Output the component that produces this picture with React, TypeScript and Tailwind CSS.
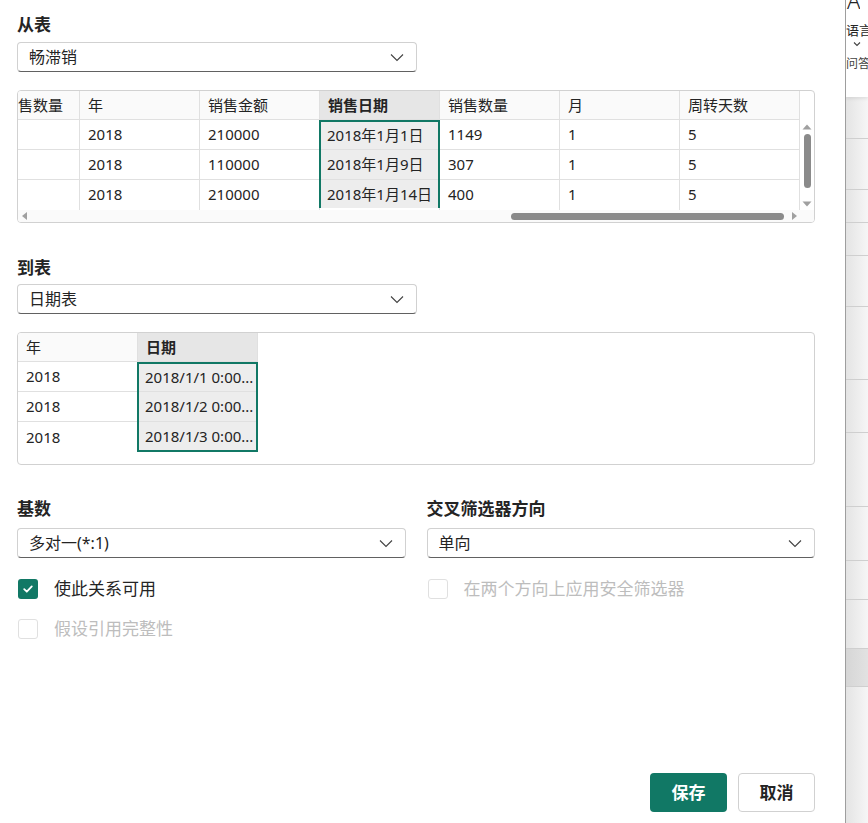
import React from "react";

const FONT = { fontFamily: '"Noto Sans", "Noto Sans CJK SC", sans-serif' };

function Chevron() {
  return (
    <svg width="16" height="16" viewBox="0 0 16 16" className="shrink-0">
      <path d="M2 5.5 L8 11.5 L14 5.5" fill="none" stroke="#424242" strokeWidth="1.1" />
    </svg>
  );
}

function Dropdown({ value }: { value: string }) {
  return (
    <div className="h-[30px] flex items-center justify-between pl-[11px] pr-[11px] border border-[#d1d1d1] border-b-[#616161] rounded-[4px] bg-white text-[16px] text-[#242424]">
      <span>{value}</span>
      <Chevron />
    </div>
  );
}

function Label({ text }: { text: string }) {
  return <div className="h-[20px] leading-[20px] text-[17px] font-bold text-[#242424]">{text}</div>;
}

function Cell({ text, last, h = 30 }: { text: string; last?: boolean; h?: number }) {
  return (
    <div
      className={`px-[8px] flex items-center text-[15px] text-[#242424] whitespace-nowrap overflow-hidden ${last ? "" : "border-b border-[#e0e0e0]"}`}
      style={{ height: h }}
    >
      {text}
    </div>
  );
}

type Col = { head: string; cells: string[]; selected?: boolean };

function Column({ col, width, rowH, closed }: { col: Col; width: number; rowH: number[]; closed?: boolean }) {
  return (
    <div className="flex flex-col border-r border-[#e0e0e0] shrink-0" style={{ width }}>
      <div
        className={`h-[29px] px-[8px] flex items-center text-[15px] text-[#242424] border-b border-[#e0e0e0] whitespace-nowrap ${col.selected ? "bg-[#e6e6e6] font-bold" : "bg-[#fafafa]"}`}
      >
        {col.head}
      </div>
      {col.selected ? (
        <div
          className={`border-2 border-[#117865] bg-[#ededed] -ml-[1px] -mr-[1px] ${closed ? "" : "border-b-0"}`}
        >
          {col.cells.map((c, i) => (
            <div
              key={i}
              className={`px-[6px] flex items-center text-[15px] text-[#242424] whitespace-nowrap overflow-hidden ${i < col.cells.length - 1 ? "border-b border-[#e0e0e0]" : ""}`}
              style={{ height: rowH[i] - (i === 0 ? 2 : 0) - (closed && i === col.cells.length - 1 ? 2 : 0) }}
            >
              {c}
            </div>
          ))}
        </div>
      ) : (
        col.cells.map((c, i) => (
          <Cell key={i} text={c} h={rowH[i]} last={i === col.cells.length - 1} />
        ))
      )}
    </div>
  );
}

function Checkbox({ checked, disabled, label }: { checked?: boolean; disabled?: boolean; label: string }) {
  return (
    <div className="flex items-center h-[20px]">
      {checked ? (
        <div className="w-[20px] h-[20px] rounded-[3px] bg-[#117865] flex items-center justify-center shrink-0">
          <svg width="12" height="12" viewBox="0 0 12 12">
            <path d="M2.2 6.2 L4.8 8.7 L9.8 3.4" fill="none" stroke="#fff" strokeWidth="1.8" strokeLinecap="round" strokeLinejoin="round" />
          </svg>
        </div>
      ) : (
        <div className="w-[20px] h-[20px] rounded-[3px] border border-[#e0e0e0] bg-white shrink-0" />
      )}
      <span className={`ml-[16px] text-[17px] whitespace-nowrap ${disabled ? "text-[#bdbdbd]" : "text-[#242424]"}`}>{label}</span>
    </div>
  );
}

function Tri({ dir }: { dir: "l" | "r" | "u" | "d" }) {
  const d = {
    l: "M6 1 L1 5 L6 9 Z",
    r: "M1 1 L6 5 L1 9 Z",
    u: "M0.5 6.5 L5 1.5 L9.5 6.5 Z",
    d: "M0.5 1.5 L5 6.5 L9.5 1.5 Z",
  }[dir];
  const horiz = dir === "l" || dir === "r";
  const w = horiz ? 7 : 10;
  const h = horiz ? 10 : 8;
  return (
    <svg width={w} height={h} viewBox={`0 0 ${w} ${h}`}>
      <path d={d} fill="#a0a0a0" />
    </svg>
  );
}

const fromCols: Col[] = [
  { head: "年", cells: ["2018", "2018", "2018"] },
  { head: "销售金额", cells: ["210000", "110000", "210000"] },
  { head: "销售日期", cells: ["2018年1月1日", "2018年1月9日", "2018年1月14日"], selected: true },
  { head: "销售数量", cells: ["1149", "307", "400"] },
  { head: "月", cells: ["1", "1", "1"] },
  { head: "周转天数", cells: ["5", "5", "5"] },
];

const toCols: Col[] = [
  { head: "年", cells: ["2018", "2018", "2018"] },
  { head: "日期", cells: ["2018/1/1 0:00...", "2018/1/2 0:00...", "2018/1/3 0:00..."], selected: true },
];

function FromTable() {
  const rowH = [30, 30, 28];
  return (
    <div className="h-[133px] border border-[#d1d1d1] rounded-[4px] overflow-hidden flex flex-col bg-white">
      <div className="flex h-[119px]">
        {/* first column, scrolled partly out of view */}
        <div className="w-[62px] shrink-0 flex flex-col border-r border-[#e0e0e0] overflow-hidden">
          <div className="h-[29px] flex items-center text-[15px] text-[#242424] bg-[#fafafa] border-b border-[#e0e0e0] whitespace-nowrap">
            <span>售数量</span>
          </div>
          <div className="h-[30px] border-b border-[#e0e0e0]" />
          <div className="h-[30px] border-b border-[#e0e0e0]" />
          <div className="h-[28px]" />
        </div>
        {fromCols.map((c, i) => (
          <Column key={i} col={c} width={120} rowH={rowH} />
        ))}
        {/* vertical scrollbar */}
        <div className="w-[14px] shrink-0 flex flex-col items-center">
          <div className="h-[29px] w-full" />
          <div className="flex-1 flex flex-col items-center pt-[3px] pb-[2px] bg-white">
            <Tri dir="u" />
            <div className="w-[7px] h-[54px] rounded-full bg-[#8a8a8a] mt-[3px]" />
            <div className="flex-1" />
            <Tri dir="d" />
          </div>
        </div>
      </div>
      <div className="h-[12px] flex items-center bg-[#fafafa] pl-[3px] pr-[16px]">
        <Tri dir="l" />
        <div className="flex-1" />
        <div className="w-[273px] h-[7px] rounded-full bg-[#8a8a8a]" />
        <div className="w-[7px]" />
        <Tri dir="r" />
      </div>
    </div>
  );
}

function ToTable() {
  const rowH = [30, 30, 30];
  return (
    <div className="h-[133px] border border-[#d1d1d1] rounded-[4px] overflow-hidden flex items-start bg-white">
      {toCols.map((c, i) => (
        <Column key={i} col={c} width={120} rowH={rowH} closed />
      ))}
    </div>
  );
}

function SideStrip() {
  const segs = [42, 51, 33, 33, 51, 73, 53, 74, 54, 39, 49];
  return (
    <div className="w-[23px] shrink-0 h-full flex flex-col border-l border-[#9e9e9e] overflow-hidden" style={FONT}>
      <div className="h-[97px] shrink-0 bg-white flex flex-col items-start text-[#242424] shadow-[0_2px_3px_rgba(0,0,0,0.08)] relative z-10">
        <div className="h-[12px] text-[22px] leading-[12px] font-light pl-[1px] overflow-hidden">
          <span className="relative -top-[6px]">A</span>
        </div>
        <div className="mt-[10px] text-[13px] leading-[16px] whitespace-nowrap">语言</div>
        <div className="mt-[3px] w-full flex justify-center">
          <svg width="8" height="6" viewBox="0 0 8 6">
            <path d="M1 1.5 L4 4.5 L7 1.5" fill="none" stroke="#424242" strokeWidth="1.1" />
          </svg>
        </div>
        <div className="mt-[9px] text-[12px] leading-[15px] whitespace-nowrap text-[#424242]">问答</div>
      </div>
      {segs.map((h, i) => (
        <div
          key={i}
          className="shrink-0 border-b border-[#cfcfcf] bg-gradient-to-r from-[#e4e4e4] to-[#f6f6f6]"
          style={{ height: h }}
        />
      ))}
      <div className="h-[38px] shrink-0 border-b border-[#cfcfcf] bg-gradient-to-r from-[#d6d6d6] to-[#e2e2e2]" />
      <div className="flex-1 bg-gradient-to-r from-[#e4e4e4] to-[#f6f6f6]" />
    </div>
  );
}

export default function App() {
  return (
    <div className="w-[868px] h-[823px] flex bg-white overflow-hidden" style={FONT}>
      <div className="w-[845px] shrink-0 h-full flex flex-col pl-[17px] pr-[30px] pt-[15px] pb-[11px]">
        <Label text="从表" />
        <div className="mt-[7px] w-[400px]">
          <Dropdown value="畅滞销" />
        </div>
        <div className="mt-[18px]">
          <FromTable />
        </div>

        <div className="mt-[35px]">
          <Label text="到表" />
        </div>
        <div className="mt-[6px] w-[400px]">
          <Dropdown value="日期表" />
        </div>
        <div className="mt-[18px]">
          <ToTable />
        </div>

        <div className="mt-[34px] grid grid-cols-2 gap-x-[21px]">
          <div className="flex flex-col">
            <Label text="基数" />
            <div className="mt-[9px]">
              <Dropdown value="多对一(*:1)" />
            </div>
            <div className="mt-[21px] pl-[1px]">
              <Checkbox checked label="使此关系可用" />
            </div>
            <div className="mt-[20px] pl-[1px]">
              <Checkbox disabled label="假设引用完整性" />
            </div>
          </div>
          <div className="flex flex-col">
            <Label text="交叉筛选器方向" />
            <div className="mt-[9px]">
              <Dropdown value="单向" />
            </div>
            <div className="mt-[21px] pl-[1px]">
              <Checkbox disabled label="在两个方向上应用安全筛选器" />
            </div>
          </div>
        </div>

        <div className="flex-1" />
        <div className="flex justify-end gap-[11px]">
          <button className="w-[77px] h-[39px] rounded-[4px] bg-[#117865] text-white text-[17px] font-bold">保存</button>
          <button className="w-[77px] h-[39px] rounded-[4px] bg-white border border-[#d1d1d1] text-[#242424] text-[17px] font-bold">取消</button>
        </div>
      </div>
      <SideStrip />
    </div>
  );
}
